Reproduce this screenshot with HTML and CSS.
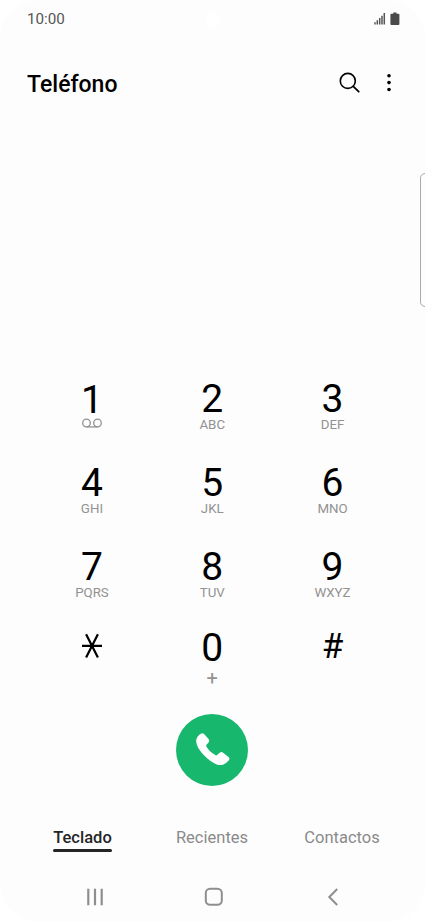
FILE: index.html
```html
<!DOCTYPE html>
<html lang="es">
<head>
    <meta charset="UTF-8">
    <meta name="viewport" content="width=device-width, initial-scale=1.0">
    <title>Teléfono</title>
    <link rel="stylesheet" href="styles.css">
</head>
<body>
    <div class="phone">
        <div class="camera"></div>
        <div class="edge-panel"></div>
        <div class="status-bar">
            <span class="time">10:00</span>
            <svg class="status-icons" width="26" height="14" viewBox="0 0 26 14">
                <path d="M1 10.3v2.2M3.3 8.3v4.2M5.7 6v6.5M8 3.7v8.8M10.3 1v11.5" stroke="#555" stroke-width="1.5"/>
                <path d="M19.3 .5h3.2v1.2h1.9a1 1 0 0 1 1 1V12a1 1 0 0 1-1 1h-7a1 1 0 0 1-1-1V2.7a1 1 0 0 1 1-1h1.9z" fill="#4a4a4a"/>
            </svg>
        </div>
        <header class="header">
            <h1>Teléfono</h1>
            <button class="icon-btn search" aria-label="Buscar">
                <svg width="22" height="22" viewBox="0 0 22 22" fill="none" stroke="#000" stroke-linecap="round">
                    <circle cx="8.8" cy="8.9" r="7.5" stroke-width="1.6"/>
                    <path d="M14.3 14.3l5.4 5.4" stroke-width="1.8"/>
                </svg>
            </button>
            <button class="icon-btn" aria-label="Más opciones">
                <svg width="6" height="22" viewBox="0 0 6 22">
                    <circle cx="3" cy="3.7" r="1.8"/>
                    <circle cx="3" cy="10.6" r="1.8"/>
                    <circle cx="3" cy="17.5" r="1.8"/>
                </svg>
            </button>
        </header>

        <main class="keypad">
            <div class="key key-one">
                <span class="digit">1</span>
                <svg class="voicemail" width="20" height="10" viewBox="0 0 20 10" fill="none" stroke="#929292" stroke-width="1.3">
                    <circle cx="4.5" cy="5" r="3.8"/>
                    <circle cx="15.5" cy="5" r="3.8"/>
                    <path d="M4.5 8.9h11"/>
                </svg>
            </div>
            <div class="key"><span class="digit">2</span><span class="letters">ABC</span></div>
            <div class="key"><span class="digit">3</span><span class="letters">DEF</span></div>
            <div class="key"><span class="digit">4</span><span class="letters">GHI</span></div>
            <div class="key"><span class="digit">5</span><span class="letters">JKL</span></div>
            <div class="key"><span class="digit">6</span><span class="letters">MNO</span></div>
            <div class="key"><span class="digit">7</span><span class="letters">PQRS</span></div>
            <div class="key"><span class="digit">8</span><span class="letters">TUV</span></div>
            <div class="key"><span class="digit">9</span><span class="letters">WXYZ</span></div>
            <div class="key">
                <svg class="star" width="22" height="26" viewBox="0 0 22 26" fill="none" stroke="#000" stroke-width="2.2">
                    <path d="M1 12.8h20M5.1 1.2l11.8 23.3M16.9 1.2L5.1 24.5"/>
                </svg>
            </div>
            <div class="key"><span class="digit">0</span><span class="letters plus">+</span></div>
            <div class="key"><span class="digit hash">#</span></div>
        </main>

        <button class="call-btn" aria-label="Llamar">
            <svg width="36" height="36" viewBox="0 0 36 36" fill="#fff">
                <path d="M5.4 2.1C6.7 1 8.2 1 9.3 2.2l4.200 4.9c1 1.2.9 2.5-.1 3.6l-1.7 1.8c-.6.7-.7 1.4-.2 2.2 2.2 3.5 5 6.2 8.7 8.3.8.5 1.6.4 2.2-.3l2-1.8c1.2-1.1 2.5-1.2 3.7-.2l5.4 4.2c1.200 1 1.300 2.300.2 3.500-2.100 2.400-4.100 4-6.600 4.500-3.500.8-7.500-.9-11.900-4.100C10.700 25.500 6.300 21.100 3.500 16.300 1.600 13 .7 9.700 1.500 6.800 2 5 3.500 3.600 5.400 2.100z"/>
            </svg>
        </button>

        <nav class="tabs">
            <a class="tab active">Teclado</a>
            <a class="tab">Recientes</a>
            <a class="tab">Contactos</a>
        </nav>

        <div class="nav-bar">
            <svg width="20" height="20" viewBox="0 0 20 20" fill="none" stroke="#8e8e8e" stroke-width="2.2">
                <path d="M3.3 1.8v16.4M10 1.8v16.4M16.7 1.8v16.4"/>
            </svg>
            <svg width="20" height="20" viewBox="0 0 20 20" fill="none" stroke="#8e8e8e" stroke-width="2">
                <rect x="1.8" y="1.8" width="16" height="16" rx="4.3"/>
            </svg>
            <svg width="20" height="20" viewBox="0 0 20 20" fill="none" stroke="#8e8e8e" stroke-width="2">
                <path d="M14.2 2L6.3 10l7.9 8"/>
            </svg>
        </div>
    </div>
</body>
</html>
```
FILE: styles.css
```css
* {
    box-sizing: border-box;
}
body {
    margin: 0;
    background: #fff;
    font-family: Roboto, "Liberation Sans", sans-serif;
}
button {
    border: none;
    background: none;
    padding: 0;
    cursor: pointer;
}
svg {
    display: block;
}
.phone {
    position: relative;
    width: 425px;
    height: 922px;
    background: #fdfdfd;
    border-radius: 38px;
    overflow: hidden;
    display: flex;
    flex-direction: column;
}
.camera {
    position: absolute;
    top: 13px;
    left: 206px;
    width: 14px;
    height: 14px;
    border-radius: 50%;
    background: #fff;
}
.edge-panel {
    position: absolute;
    top: 173px;
    right: -6px;
    width: 11px;
    height: 134px;
    border: 1px solid #aaa;
    border-radius: 5px;
}
.status-bar {
    height: 38px;
    padding: 0 25.5px 0 27px;
    display: flex;
    align-items: center;
    justify-content: space-between;
}
.time {
    font-size: 15.2px;
    line-height: 18px;
    color: #555;
}
.header {
    height: 90px;
    padding: 0 33px 0 27px;
    display: flex;
    align-items: center;
}
.header h1 {
    flex: 1;
    margin: 0;
    padding-top: 3px;
    font-size: 23px;
    line-height: 28px;
    font-weight: 500;
}
.search {
    margin-right: 25px;
}

/* dial pad */
.keypad {
    margin-top: 253px;
    padding-left: 31.8px;
    height: 332px;
    display: grid;
    grid-template-columns: repeat(3, 120.3px);
    grid-template-rows: 84px 84px 81px 83px;
}
.key {
    display: flex;
    flex-direction: column;
    align-items: center;
}
.key-one {
    padding-top: 1px;
}
.digit {
    font-size: 39px;
    line-height: 36px;
    color: #000;
}
.letters {
    font-size: 13.3px;
    line-height: 16px;
    color: #929292;
}
.plus {
    font-size: 20px;
    line-height: 24px;
}
.hash {
    font-size: 35px;
    line-height: 34px;
}
.star {
    margin-top: 3px;
}

.call-btn {
    align-self: center;
    width: 72px;
    height: 72px;
    margin: 1px 1px 0 0;
    border-radius: 50%;
    background: #17b86e;
    display: flex;
    align-items: center;
    justify-content: center;
}
.call-btn svg {
    margin: 0 0 1px 1px;
}
.tabs {
    margin-top: 41px;
    padding-left: 18px;
    display: grid;
    grid-template-columns: 129px 130px 130px;
    justify-items: center;
}
.tab {
    height: 25px;
    font-size: 16.5px;
    line-height: 22px;
    color: #8a8a8a;
}
.tab.active {
    color: #252525;
    font-weight: 500;
}
.tab.active::after {
    content: "";
    display: block;
    height: 3px;
    border-radius: 1.5px;
    background: #252525;
}
.nav-bar {
    margin-top: 35px;
    padding: 0 82px 0 85px;
    display: flex;
    justify-content: space-between;
}
```
